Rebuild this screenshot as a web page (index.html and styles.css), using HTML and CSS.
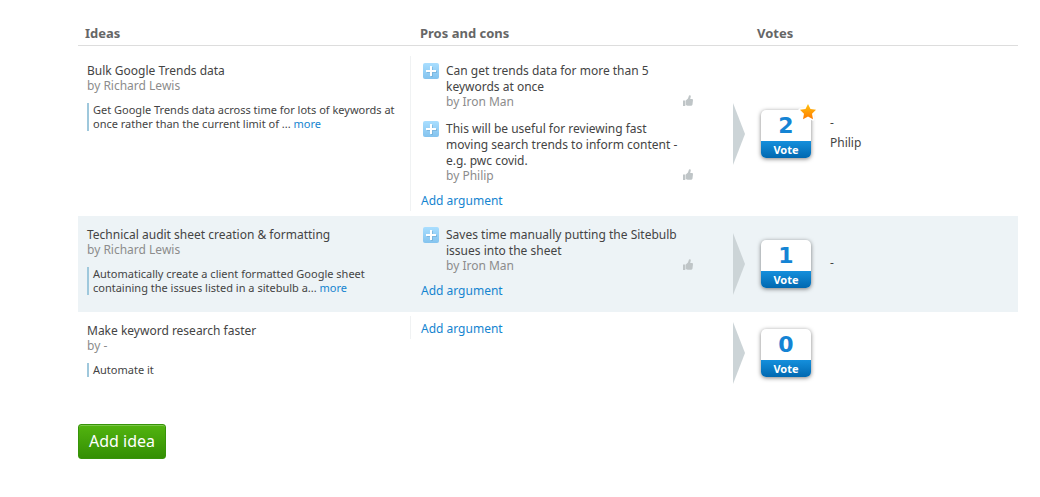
FILE: index.html
```html
<!DOCTYPE html>
<html lang="en">
<head>
<meta charset="utf-8">
<title>Ideas</title>
<link rel="stylesheet" href="styles.css">
</head>
<body>
<svg class="defs" aria-hidden="true">
  <defs>
    <linearGradient id="gold" x1="0" y1="0" x2="0" y2="1"><stop offset="0" stop-color="#ffc20e"/><stop offset="1" stop-color="#ff7a00"/></linearGradient>
    <linearGradient id="sky" x1="0" y1="0" x2="0" y2="1"><stop offset="0" stop-color="#a9deff"/><stop offset="1" stop-color="#84c3ee"/></linearGradient>
    <symbol id="plus" viewBox="0 0 16 16">
      <rect width="16" height="16" rx="2" fill="url(#sky)"/>
      <path d="M8 4h2v4h4v2h-4v4h-2v-4h-4v-2h4z" fill="#6fa9d0" opacity=".6"/>
      <path d="M7 3h2v4h4v2H9v4H7V9H3V7h4z" fill="#fff"/>
    </symbol>
    <symbol id="thumb" viewBox="0 0 10 11">
      <path d="M0 5.500h2.300V11H0zM2.800 5.500L5 3.500 6 .5Q7.800-.3 7.800 1.500L7.200 4H9q1 0 1 1L9.500 9.500Q9.200 10.800 8 10.800H4.500L2.800 10z" fill="#bfc5c7"/>
    </symbol>
  </defs>
</svg>
<main class="page">
  <table class="ideas">
    <colgroup><col class="col-idea"><col class="col-args"><col class="col-votes"></colgroup>
    <thead>
      <tr><th scope="col">Ideas</th><th scope="col" class="head-args">Pros and cons</th><th scope="col" class="head-votes">Votes</th></tr>
    </thead>
    <tbody>
      <tr>
        <td class="idea">
          <div class="title">Bulk Google Trends data</div>
          <div class="author">by Richard Lewis</div>
          <p class="summary">Get Google Trends data across time for lots of keywords at once rather than the current limit of ... <a href="#">more</a></p>
        </td>
        <td class="args">
          <div class="args-box">
            <div class="arg">
              <svg class="plus" role="img" aria-label="Pro"><use href="#plus"/></svg>
              <div class="arg-body">
                <div class="arg-text">Can get trends data for more than 5 keywords at once</div>
                <div class="arg-foot"><span class="author">by Iron Man</span><button class="like" type="button" aria-label="Like"><svg><use href="#thumb"/></svg></button></div>
              </div>
            </div>
            <div class="arg">
              <svg class="plus" role="img" aria-label="Pro"><use href="#plus"/></svg>
              <div class="arg-body">
                <div class="arg-text">This will be useful for reviewing fast moving search trends to inform content - e.g. pwc covid.</div>
                <div class="arg-foot"><span class="author">by Philip</span><button class="like" type="button" aria-label="Like"><svg><use href="#thumb"/></svg></button></div>
              </div>
            </div>
            <a class="add-arg" href="#">Add argument</a>
          </div>
        </td>
        <td class="votes">
          <div class="vote-row">
            <span class="arrow"></span>
            <div class="card">
              <span class="count">2</span><button class="vote" type="button">Vote</button>
              <svg class="star" viewBox="0 0 20 20" aria-hidden="true"><path d="M10 2l2.500 5 5.500.8-4 3.900 1 5.500-5-2.600-5 2.600 1-5.500-4-3.900L7.500 7z" fill="url(#gold)" stroke="#fff" stroke-width="3" stroke-linejoin="round" paint-order="stroke"/></svg>
            </div>
            <div class="voters"><div>-</div><div>Philip</div></div>
          </div>
        </td>
      </tr>
      <tr class="alt">
        <td class="idea">
          <div class="title">Technical audit sheet creation &amp; formatting</div>
          <div class="author">by Richard Lewis</div>
          <p class="summary">Automatically create a client formatted Google sheet containing the issues listed in a sitebulb a... <a href="#">more</a></p>
        </td>
        <td class="args">
          <div class="args-box">
            <div class="arg">
              <svg class="plus" role="img" aria-label="Pro"><use href="#plus"/></svg>
              <div class="arg-body">
                <div class="arg-text">Saves time manually putting the Sitebulb issues into the sheet</div>
                <div class="arg-foot"><span class="author">by Iron Man</span><button class="like" type="button" aria-label="Like"><svg><use href="#thumb"/></svg></button></div>
              </div>
            </div>
            <a class="add-arg" href="#">Add argument</a>
          </div>
        </td>
        <td class="votes">
          <div class="vote-row">
            <span class="arrow"></span>
            <div class="card"><span class="count">1</span><button class="vote" type="button">Vote</button></div>
            <div class="voters"><div>-</div></div>
          </div>
        </td>
      </tr>
      <tr>
        <td class="idea">
          <div class="title">Make keyword research faster</div>
          <div class="author">by -</div>
          <p class="summary">Automate it</p>
        </td>
        <td class="args">
          <div class="args-box"><a class="add-arg" href="#">Add argument</a></div>
        </td>
        <td class="votes">
          <div class="vote-row">
            <span class="arrow"></span>
            <div class="card"><span class="count">0</span><button class="vote" type="button">Vote</button></div>
          </div>
        </td>
      </tr>
    </tbody>
  </table>
  <button class="add-idea" type="button">Add idea</button>
</main>
</body>
</html>
```
FILE: styles.css
```css
body {
  margin: 0;
  background: #fff;
  color: #444;
  font: 12px/16px "Noto Sans", sans-serif;
}
.defs { position: absolute; width: 0; height: 0; }
.page { padding: 22px 22px 38px 78px; }
a { color: #1484d0; text-decoration: none; }
button { font-family: inherit; border: 0; padding: 0; cursor: pointer; }

.ideas { width: 100%; border-collapse: separate; border-spacing: 0; table-layout: fixed; }
.col-idea { width: 332px; }
.col-args { width: 323px; }
th {
  padding: 3px 7px 4px;
  border-bottom: 1px solid #ddd;
  color: #666;
  font-size: 13px;
  line-height: 16px;
  text-align: left;
}
.head-args { padding-left: 10px; }
.head-votes { padding-left: 24px; }
thead::after { content: ""; display: block; height: 6px; }
td { padding: 0; vertical-align: top; }
.alt td { background: #edf3f6; }

.idea { padding: 11px 8px 17px 9px; }
.title { line-height: 16px; }
.author { color: #8c8c8c; line-height: 14px; }
.summary {
  margin: 10px 0 0;
  padding: 0 0 0 4px;
  border-left: 2px solid #9fc8dc;
  font-size: 11px;
  line-height: 14px;
}
.summary a { display: inline-block; }

.args { padding: 4px 0 5px; }
.args-box { padding: 3px 40px 1px 10px; border-left: 1px solid #f0f2f3; }
.alt .args-box { border-color: #edf3f6; }
.arg { display: flex; gap: 7px; padding: 4px 0 8px 2px; }
.plus { flex: none; width: 16px; height: 16px; }
.arg-body { flex: 1; }
.arg-text { padding-right: 8px; }
.arg-foot { display: flex; align-items: flex-start; justify-content: space-between; height: 14px; }
.like { display: flex; background: none; }
.like svg { width: 10px; height: 11px; }
.add-arg { display: block; padding-top: 1px; line-height: 18px; }

.votes { vertical-align: middle; }
.vote-row { display: flex; align-items: center; }
.arrow {
  width: 12px;
  height: 62px;
  margin-right: 16px;
  background: #ccd4d7;
  clip-path: polygon(0 0, 100% 50%, 0 100%);
}
.card {
  position: relative;
  width: 50px;
  border-radius: 5px;
  background: #fff;
  box-shadow: 0 1px 4px rgba(0, 0, 0, .5);
}
.count {
  display: block;
  color: #1484d4;
  font: bold 22px/31px "DejaVu Sans", sans-serif;
  text-align: center;
}
.vote {
  display: block;
  width: 100%;
  height: 17px;
  border-radius: 0 0 5px 5px;
  background: linear-gradient(#158fdc, #0068b0);
  color: #fff;
  font-size: 11px;
  font-weight: bold;
  line-height: 17px;
}
.star { position: absolute; top: -8px; right: -7px; width: 20px; height: 20px; }
.voters { margin-left: 19px; padding-bottom: 3px; line-height: 20px; }

.add-idea {
  margin-top: 30px;
  padding: 0 10px;
  border: 1px solid #379409;
  border-radius: 3px;
  background: linear-gradient(#52b40f, #348f04);
  box-shadow: inset 0 1px #7cc64b;
  color: #fff;
  font-size: 16px;
  line-height: 33px;
}
```
